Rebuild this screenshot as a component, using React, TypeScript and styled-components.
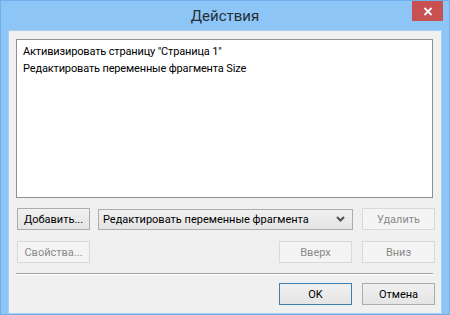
import React from 'react';
import styled, { createGlobalStyle } from 'styled-components';

const GlobalStyle = createGlobalStyle`
  html, body {
    margin: 0;
    padding: 0;
    overflow: hidden;
  }
  body {
    font-family: Roboto, 'Noto Sans', sans-serif;
    font-size: 11px;
  }
`;

const Frame = styled.div`
  width: 450px;
  height: 315px;
  box-sizing: border-box;
  background: #8cc5f6;
  border: 1px solid #6fb0ea;
  display: flex;
  flex-direction: column;
`;

const TitleBar = styled.div`
  height: 29px;
  flex: none;
  display: grid;
  grid-template-columns: 1fr auto 1fr;
  align-items: start;
`;

const Title = styled.div`
  grid-column: 2;
  padding-top: 6px;
  font-size: 15px;
  color: #262e36;
`;

const CloseButton = styled.div`
  grid-column: 3;
  justify-self: end;
  width: 31px;
  height: 20px;
  margin-right: 6px;
  background: #c75050;
  display: flex;
  align-items: center;
  justify-content: center;
`;

const Client = styled.div`
  margin: 0 7px 7px 7px;
  flex: 1;
  background: #f0f0f0;
  border: 1px solid #a7cdf0;
  display: flex;
  flex-direction: column;
  padding: 8px 6px 8px 8px;
`;

const ListBox = styled.div`
  height: 151px;
  flex: none;
  margin: 0 2px 10px -1px;
  background: #fff;
  border: 1px solid #8c9099;
  padding: 3px 6px;
  color: #000;
  letter-spacing: -0.15px;
`;

const ListItem = styled.div`
  line-height: 17px;
  white-space: nowrap;
`;

const Row = styled.div<{ $gap?: number }>`
  display: flex;
  flex: none;
  align-items: center;
  gap: ${({ $gap }) => $gap ?? 9}px;
  height: 22px;
`;

const RowGap = styled.div<{ $h: number }>`
  height: ${({ $h }) => $h}px;
  flex: none;
`;

const Spacer = styled.div`
  flex: 1;
`;

const Button = styled.div<{ $disabled?: boolean; $default?: boolean }>`
  box-sizing: border-box;
  width: 73px;
  height: 22px;
  flex: none;
  display: flex;
  align-items: center;
  justify-content: center;
  border: 1px solid
    ${({ $disabled, $default }) => ($default ? '#3c7fb1' : $disabled ? '#d9d9d9' : '#acacac')};
  background: ${({ $disabled }) =>
    $disabled ? '#f4f4f4' : 'linear-gradient(#f0f0f0, #e5e5e5)'};
  color: ${({ $disabled }) => ($disabled ? '#8a8a8a' : '#000')};
  white-space: nowrap;
`;

const Combo = styled.div`
  box-sizing: border-box;
  width: 255px;
  height: 21px;
  flex: none;
  display: flex;
  align-items: center;
  padding: 0 7px 0 4px;
  border: 1px solid #acacac;
  background: linear-gradient(#f0f0f0, #e5e5e5);
  color: #000;
  margin-left: -1px;
`;

const ComboText = styled.span`
  flex: 1;
  white-space: nowrap;
`;

const Separator = styled.div`
  height: 1px;
  flex: none;
  margin: 0 2px 8px -1px;
  background: #a0a0a0;
  border-bottom: 1px solid #fff;
`;

const Chevron = () => (
  <svg width="9" height="6" viewBox="0 0 9 6">
    <path d="M1 1 L4.5 4.5 L8 1" fill="none" stroke="#505050" strokeWidth="2" />
  </svg>
);

const CloseIcon = () => (
  <svg width="10" height="9" viewBox="0 0 10 9">
    <path d="M1.5 1 L8.5 8 M8.5 1 L1.5 8" stroke="#fff" strokeWidth="1.8" />
  </svg>
);

const App = () => (
  <>
    <GlobalStyle />
    <Frame>
      <TitleBar>
        <Title>Действия</Title>
        <CloseButton>
          <CloseIcon />
        </CloseButton>
      </TitleBar>
      <Client>
        <ListBox>
          <ListItem>Активизировать страницу "Страница 1"</ListItem>
          <ListItem>Редактировать переменные фрагмента Size</ListItem>
        </ListBox>
        <Row>
          <Button>Добавить...</Button>
          <Combo>
            <ComboText>Редактировать переменные фрагмента</ComboText>
            <Chevron />
          </Combo>
          <Button $disabled>Удалить</Button>
        </Row>
        <RowGap $h={11} />
        <Row $gap={10}>
          <Button $disabled>Свойства...</Button>
          <Spacer />
          <Button $disabled>Вверх</Button>
          <Button $disabled>Вниз</Button>
        </Row>
        <RowGap $h={10} />
        <Separator />
        <Row $gap={10}>
          <Spacer />
          <Button $default>OK</Button>
          <Button>Отмена</Button>
        </Row>
      </Client>
    </Frame>
  </>
);

export default App;
